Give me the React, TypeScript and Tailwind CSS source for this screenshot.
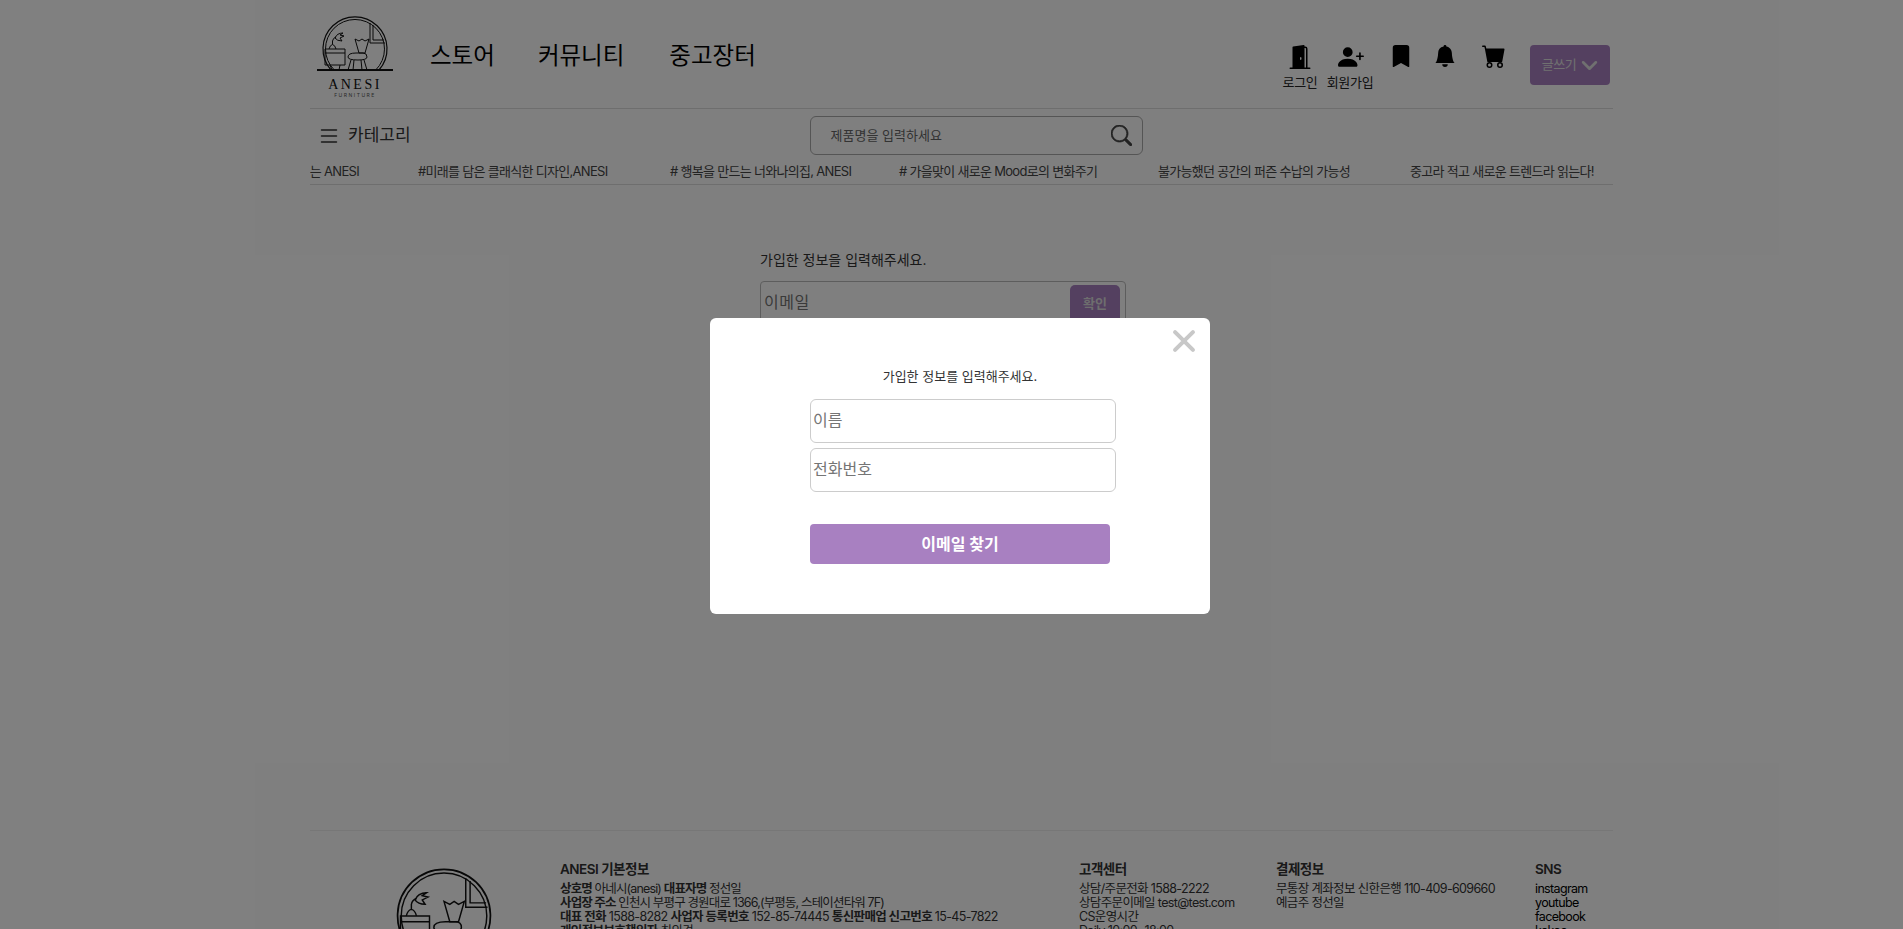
import { BsBellFill, BsBookmarkFill, BsCartFill, BsChevronDown, BsDoorOpenFill, BsList, BsPersonPlusFill, BsSearch, BsXLg } from 'react-icons/bs';

const font = { fontFamily: '"Inter", "Noto Sans CJK KR", sans-serif' };

function LogoMark({ className }: { className: string }) {
  return (
    <svg viewBox="0 0 80 62" className={className} fill="none" stroke="#111" strokeWidth="1">
      <path d="M16 54 A32 32 0 1 1 64 54" strokeWidth="1.2" />
      <path d="M19.300 54 A29.500 29.500 0 1 1 60.700 54" />
      <path d="M2 54 H78" strokeWidth="2" />
      <path d="M55 7 V27 H70 M58 9 V24 H69" />
      <path d="M10 33 H30 V49 H10 Z M10 37 H30" />
      <path d="M15 49 L17 54 M25 49 L24 54" />
      <path d="M14 33 Q15 29 17.500 28.500 Q20 29 21 33 M17.500 28.500 V25 Q18 22 21 21" />
      <path d="M20 22 Q22 17 28 17 L25 19 L29 20 L25 22 L27 25 Q22 25 20 22 Z" />
      <path d="M40 23 L44 25 L47 23 L50 25 L54 23 L50 37 H44 Z" />
      <path d="M33 41 Q33 37 41 37 H48 Q52 37 52 41 Q52 44 43 44 Q33 44 33 41 Z" />
      <path d="M36 44 L33 54 M49 44 L52 54 M39 44 L38 54 M46 44 L47 54" />
    </svg>
  );
}

function Topic({ w, children }: { w: string; children: string }) {
  return <li className={`${w} shrink-0 whitespace-nowrap`}>{children}</li>;
}

export default function App() {
  return (
    <div className="relative h-screen overflow-hidden bg-white text-[#222]" style={font}>
      <div className="ml-[310px] w-[1303px]">
        {/* 상단 헤더 */}
        <header className="flex h-[109px] border-b border-[#ddd]">
          <div className="ml-[5px] flex w-[80px] flex-col items-center pt-[16px]">
            <LogoMark className="h-[62px] w-[80px]" />
            <div className="text-[14px] leading-[14px] tracking-[2.5px] text-[#111]" style={{ fontFamily: '"Liberation Serif", serif' }}>ANESI</div>
            <div className="text-[5px] leading-[6px] tracking-[1.5px] text-[#555]">FURNITURE</div>
          </div>
          <nav className="ml-[35px] flex gap-[43px] pt-[39px] text-[23.500px] leading-[34px] text-black">
            <a>스토어</a>
            <a>커뮤니티</a>
            <a className="ml-[2px]">중고장터</a>
          </nav>
          <div className="ml-auto mr-[3px] flex pt-[45px]">
            <div className="flex w-[50px] flex-col items-center">
              <BsDoorOpenFill className="size-[24px] text-black" />
              <span className="mt-[4px] text-[13px] leading-[18px] tracking-[-0.3px]">로그인</span>
            </div>
            <div className="flex w-[50px] flex-col items-center">
              <BsPersonPlusFill className="-mt-[1px] ml-[1px] size-[26px] text-black" />
              <span className="mt-[3px] whitespace-nowrap text-[13px] leading-[18px] tracking-[-0.3px]">회원가입</span>
            </div>
            <BsBookmarkFill className="ml-[15px] size-[22px] text-black" />
            <BsBellFill className="ml-[22px] size-[22px] text-black" />
            <BsCartFill className="ml-[26px] -mt-[1px] size-[24px] text-black" />
            <button className="ml-[24px] flex h-[40px] w-[80px] items-center justify-center gap-[5px] rounded-[4px] bg-[#a880c1] text-[13px] tracking-[-0.5px] text-[#e0e0e0]">
              글쓰기
              <BsChevronDown className="size-[17px] stroke-[1.5px]" />
            </button>
          </div>
        </header>

        {/* 카테고리, 검색 */}
        <div className="flex h-[50px] items-center">
          <div className="ml-[7px] mt-[3px] flex items-center gap-[7px] text-[#333]">
            <BsList className="size-[24px]" />
            <span className="text-[17px]">카테고리</span>
          </div>
          <div className="ml-[399px] mt-[2px] flex h-[39px] w-[333px] items-center justify-between rounded-[6px] border border-[#aaa] pl-[20px] pr-[10px] text-[13px] text-[#666]">
            <span className="pt-[2px]">제품명을 입력하세요</span>
            <BsSearch className="size-[21px] stroke-[0.5px] text-[#444]" />
          </div>
        </div>

        {/* 흐르는 문구 */}
        <ul className="flex h-[26px] items-center overflow-hidden border-b border-[#ddd] text-[13px] tracking-[-0.7px] text-[#444]">
          <li className="w-[108px] shrink-0">
            <div className="flex w-[49px] justify-end whitespace-nowrap">는 ANESI</div>
          </li>
          <Topic w="w-[252px]">#미래를 담은 클래식한 디자인,ANESI</Topic>
          <Topic w="w-[229px]"># 행복을 만드는 너와나의집, ANESI</Topic>
          <Topic w="w-[259px]"># 가을맞이 새로운 Mood로의 변화주기</Topic>
          <Topic w="w-[252px]">불가능했던 공간의 퍼즌 수납의 가능성</Topic>
          <Topic w="w-[203px]">중고라 적고 새로운 트렌드라 읽는다!</Topic>
        </ul>

        {/* 이메일 찾기 폼 */}
        <main className="h-[646px] border-b border-[#eee] pl-[450px] pt-[63px]">
          <p className="text-[14px] leading-[24px] text-[#333]">가입한 정보을 입력해주세요.</p>
          <div className="mt-[9px] flex h-[48px] w-[366px] items-start justify-between rounded-[4px] border border-[#bbb] pl-[3px] pr-[5px] pt-[3px]">
            <span className="pt-[5px] text-[16px] tracking-[0.500px] text-[#757575]">이메일</span>
            <button className="h-[38px] w-[50px] rounded-[5px] bg-[#a880c1] text-[13px] font-bold text-[#ddd]">확인</button>
          </div>
        </main>

        {/* 푸터 */}
        <footer className="flex pt-[30px] text-[12.500px] leading-[14px] tracking-[-0.650px] text-[#333]">
          <div className="ml-[76px] w-[174px]">
            <LogoMark className="mt-[7px] h-[90px] w-[116px]" />
          </div>
          <div className="w-[519px]">
            <h3 className="mb-[5px] text-[13.500px] font-semibold leading-[16px] tracking-[-0.500px]">ANESI 기본정보</h3>
            <p className="tracking-[-0.850px]"><b className="font-semibold">상호명</b> 아네시(anesi) <b className="font-semibold">대표자명</b> 정선일</p>
            <p className="tracking-[-0.850px]"><b className="font-semibold">사업장 주소</b> 인천시 부평구 경원대로 1366,(부평동, 스테이션타워 7F)</p>
            <p><b className="font-semibold">대표 전화</b> 1588-8282 <b className="font-semibold">사업자 등록번호</b> 152-85-74445 <b className="font-semibold">통신판매업 신고번호</b> 15-45-7822</p>
            <p><b className="font-semibold">개인정보보호책임자</b> 최의견</p>
          </div>
          <div className="w-[197px]">
            <h3 className="mb-[5px] text-[13.500px] font-semibold leading-[16px] tracking-[-0.500px]">고객센터</h3>
            <p>상담/주문전화 1588-2222</p>
            <p>상담주문이메일 test@test.com</p>
            <p>CS운영시간</p>
            <p>Daily 10:00~18:00</p>
          </div>
          <div className="w-[259px]">
            <h3 className="mb-[5px] text-[13.500px] font-semibold leading-[16px] tracking-[-0.500px]">결제정보</h3>
            <p>무통장 계좌정보 신한은행 110-409-609660</p>
            <p>예금주 정선일</p>
          </div>
          <div>
            <h3 className="mb-[5px] text-[13.500px] font-semibold leading-[16px] tracking-[-0.500px]">SNS</h3>
            <p className="text-black">instagram</p>
            <p className="text-black">youtube</p>
            <p className="text-black">facebook</p>
            <p className="text-black">kakao</p>
          </div>
        </footer>
      </div>

      {/* 딤 + 모달 */}
      <div className="absolute inset-0 bg-black/50">
        <div className="absolute left-[710px] top-[318px] flex h-[296px] w-[500px] flex-col rounded-[6px] bg-white">
          <button className="absolute right-[13px] top-[10px] text-[#c8c8c8]">
            <BsXLg className="size-[26px] stroke-[1.5px]" />
          </button>
          <p className="mt-[48px] text-center text-[13px] leading-[20px] text-[#333]">가입한 정보를 입력해주세요.</p>
          <div className="ml-[100px] mt-[13px] flex w-[306px] flex-col gap-[5px]">
            <div className="flex h-[44px] items-center rounded-[6px] border border-[#ccc] pl-[2px] pb-[3px] text-[16px] text-[#757575]">이름</div>
            <div className="flex h-[44px] items-center rounded-[6px] border border-[#ccc] pl-[2px] pb-[3px] text-[16px] text-[#757575]">전화번호</div>
          </div>
          <button className="ml-[100px] mt-[32px] h-[40px] w-[300px] rounded-[4px] bg-[#a880c1] text-[16px] font-bold text-white">이메일 찾기</button>
        </div>
      </div>
    </div>
  );
}
